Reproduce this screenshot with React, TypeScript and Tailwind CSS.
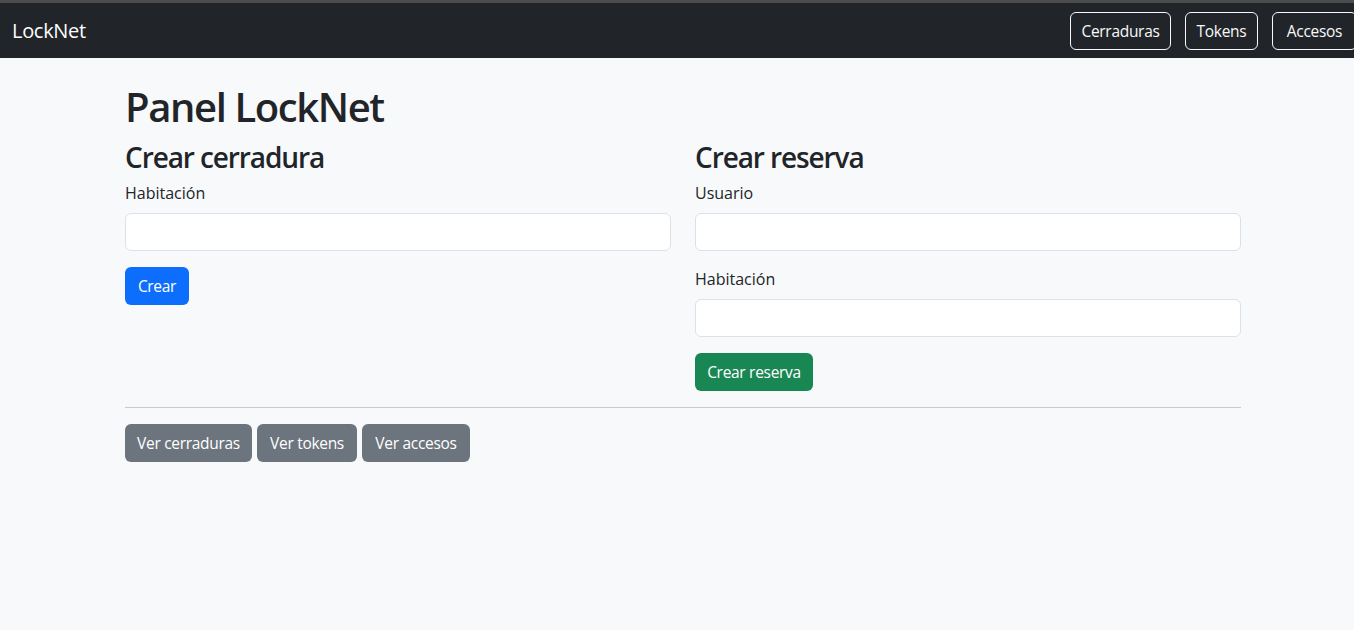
import React from "react";

const font = { fontFamily: '"Open Sans", "Noto Sans", Arial, sans-serif' };

function Field({ label }: { label: string }) {
  return (
    <div className="mb-4">
      <label className="block mb-2 text-[16px] leading-6 text-[#212529]">{label}</label>
      <input
        type="text"
        className="block w-full h-[38px] rounded-[6px] border border-[#dee2e6] bg-white px-3 outline-none"
      />
    </div>
  );
}

export default function App() {
  return (
    <div className="min-h-[630px] bg-[#f8f9fa] text-[#212529]" style={font}>
      <div className="h-[3px] bg-[#4d4d4d]" />
      <nav className="h-[55px] bg-[#212529] flex items-center pl-3 overflow-hidden">
        <span className="text-white text-[20px] leading-[30px] tracking-[-0.3px]">LockNet</span>
        <div className="ml-auto flex gap-[14px] mr-[-3px]">
          <button className="w-[101px] h-[38px] pt-[2px] rounded-[6px] border border-[#f8f9fa] text-[#f8f9fa] text-[15.5px] tracking-[-0.3px]">
            Cerraduras
          </button>
          <button className="w-[73px] h-[38px] pt-[2px] rounded-[6px] border border-[#f8f9fa] text-[#f8f9fa] text-[15.5px] tracking-[-0.3px]">
            Tokens
          </button>
          <button className="w-[85px] h-[38px] pt-[2px] rounded-[6px] border border-[#f8f9fa] text-[#f8f9fa] text-[15.5px] tracking-[-0.3px]">
            Accesos
          </button>
        </div>
      </nav>
      <main className="ml-[125px] w-[1116px] pt-[25px]">
        <h1 className="text-[40px] leading-[48px] font-[560] mb-2 tracking-[-1.4px]">Panel LockNet</h1>
        <div className="grid grid-cols-2 gap-x-6">
          <section>
            <h3 className="text-[28px] leading-[33.6px] font-[560] pt-[2px] mb-[6px] tracking-[-1.1px]">Crear cerradura</h3>
            <Field label="Habitación" />
            <button className="w-[64px] h-[38px] pt-[2px] rounded-[6px] bg-[#0d6efd] text-white text-[15.5px] tracking-[-0.3px]">
              Crear
            </button>
          </section>
          <section>
            <h3 className="text-[28px] leading-[33.6px] font-[560] pt-[2px] mb-[6px] tracking-[-1.1px]">Crear reserva</h3>
            <Field label="Usuario" />
            <Field label="Habitación" />
            <button className="w-[118px] h-[38px] pt-[2px] rounded-[6px] bg-[#198754] text-white text-[15.5px] tracking-[-0.3px]">
              Crear reserva
            </button>
          </section>
        </div>
        <hr className="my-4 border-0 border-t border-[#c8c9ca]" />
        <div className="flex gap-[5px]">
          <button className="w-[127px] h-[38px] pt-[2px] rounded-[6px] bg-[#6c757d] text-white text-[15.5px] tracking-[-0.3px]">
            Ver cerraduras
          </button>
          <button className="w-[100px] h-[38px] pt-[2px] rounded-[6px] bg-[#6c757d] text-white text-[15.5px] tracking-[-0.3px]">
            Ver tokens
          </button>
          <button className="w-[108px] h-[38px] pt-[2px] rounded-[6px] bg-[#6c757d] text-white text-[15.5px] tracking-[-0.3px]">
            Ver accesos
          </button>
        </div>
      </main>
    </div>
  );
}
